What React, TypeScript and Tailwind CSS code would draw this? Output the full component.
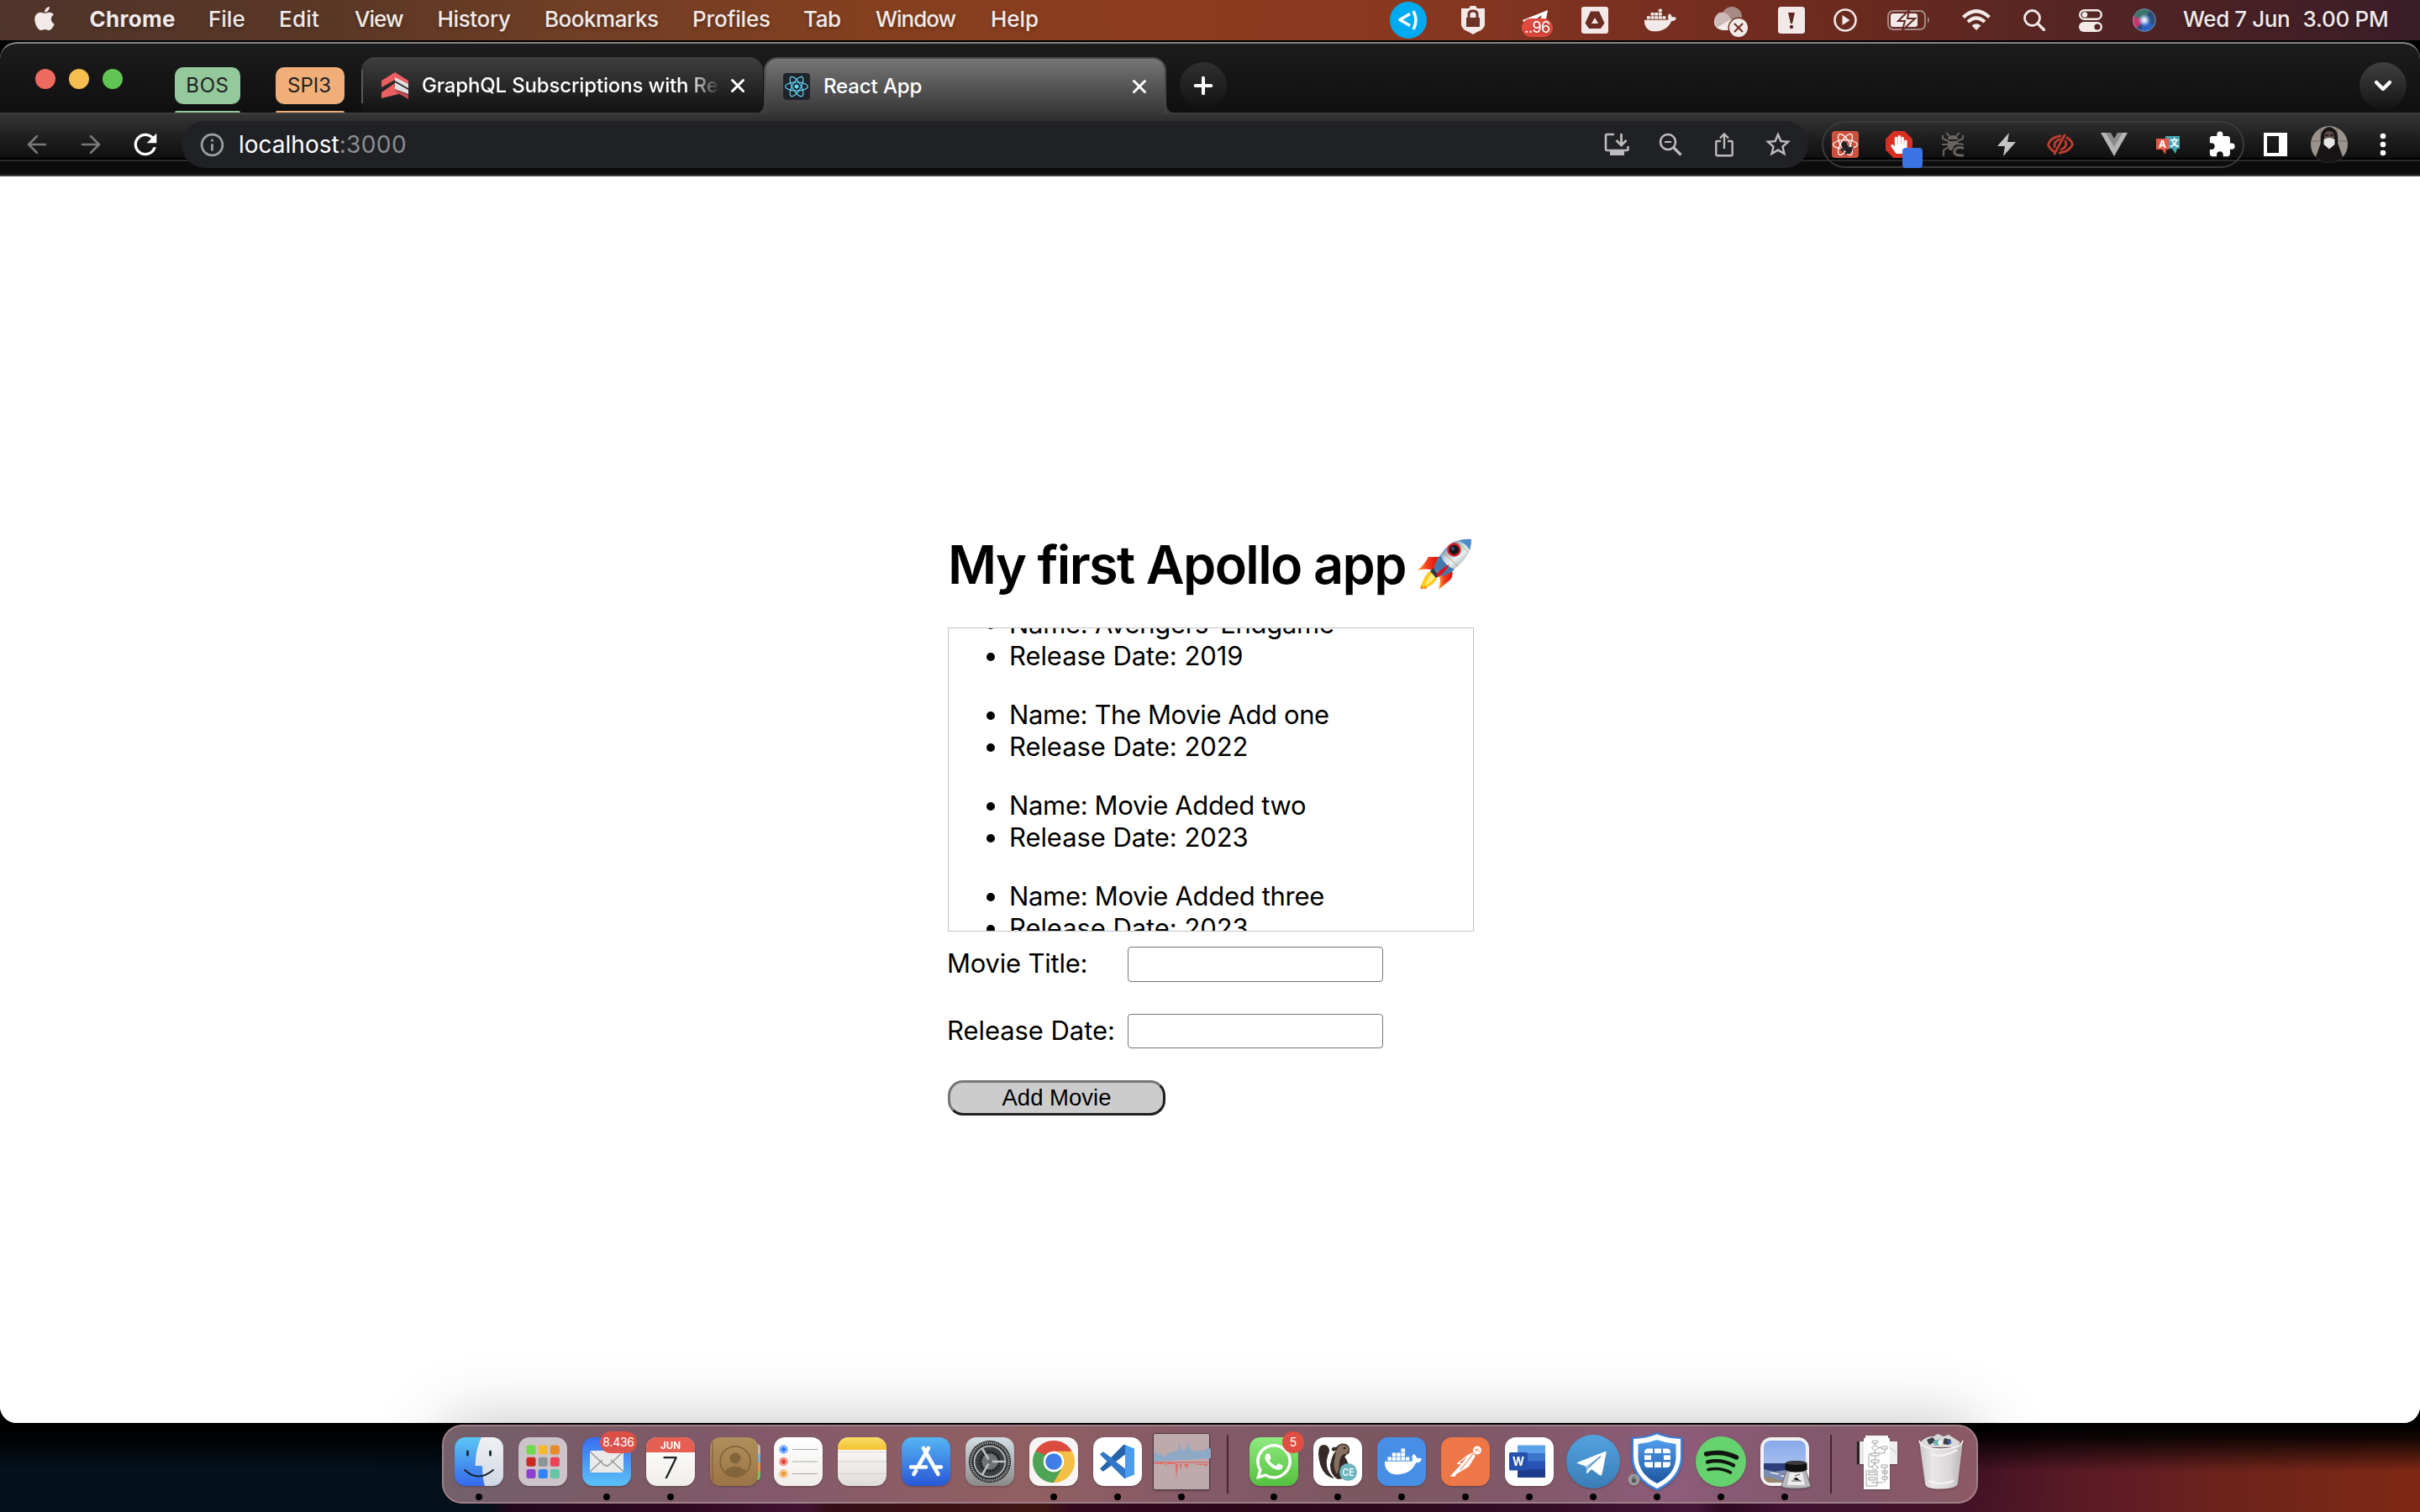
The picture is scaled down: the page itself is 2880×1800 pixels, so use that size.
import React from "react";
import { ArrowLeft, ArrowRight, ChevronDown, Plus, X } from "lucide-react";
import { FaApple, FaDocker, FaHandPaper, FaReact, FaWhatsapp } from "react-icons/fa";
import { MdExtension, MdInfoOutline, MdRefresh, MdStarBorder } from "react-icons/md";

const menus = [
  { label: "Chrome", cls: "w-[141.5px] font-bold tracking-[0.29px]" },
  { label: "File", cls: "w-[84px]" },
  { label: "Edit", cls: "w-[90px] tracking-[0.23px]" },
  { label: "View", cls: "w-[98.5px] tracking-[-0.94px]" },
  { label: "History", cls: "w-[127.5px] tracking-[-0.36px]" },
  { label: "Bookmarks", cls: "w-[176px] tracking-[-0.48px]" },
  { label: "Profiles", cls: "w-[132px] tracking-[-0.18px]" },
  { label: "Tab", cls: "w-[86px] tracking-[-0.42px]" },
  { label: "Window", cls: "w-[137px] tracking-[-1.02px]" },
  { label: "Help", cls: "tracking-[-0.06px]" },
];

function MenuBar() {
  return (
    <header className="flex h-12 shrink-0 items-center bg-[linear-gradient(90deg,#4f342a_0%,#5b3826_14%,#713e26_24%,#84401f_36%,#8e3b1f_48%,#8a391f_57%,#7a3021_67%,#67291f_78%,#522424_87%,#3a1d28_100%)] text-[26px] font-medium text-[#f1eae8] [text-shadow:0_2px_4px_rgba(0,0,0,0.3)]">
      <div className="flex w-[1654px] shrink-0 items-center pl-[37px]">
        <FaApple className="-mt-1 mr-[37.5px] size-8 shrink-0" />
        <nav className="flex pb-[3px]">
          {menus.map((m) => (
            <span key={m.label} className={`shrink-0 whitespace-nowrap ${m.cls}`}>
              {m.label}
            </span>
          ))}
        </nav>
      </div>
      <svg className="size-11 shrink-0" viewBox="0 0 44 44">
        <circle cx="22" cy="22" r="22" fill="#00aaf0" />
        <path d="M24 14.500 L12 21.500 L24 28.500" fill="none" stroke="#fff" strokeWidth="3.500" strokeLinejoin="round" />
        <path d="M28 11 Q34 22 28 33" fill="none" stroke="#fff" strokeWidth="3.500" />
      </svg>
      <svg className="ml-[41px] h-[34px] w-7 shrink-0" viewBox="0 0 28 34">
        <path d="M0 3h9l2-3h6l2 3h9v20q-1 5-9 8l-5 3-5-3q-8-3-9-8z" fill="#f1eae8" />
        <path d="M6 14h16v11H6z" fill="#6e3325" />
        <path d="M9 15V10q0-4 5-4t5 4v5" fill="none" stroke="#6e3325" strokeWidth="3" />
      </svg>
      <div className="relative ml-11 h-8 w-[37px] shrink-0">
        <svg className="absolute left-0 top-1 h-4 w-8" viewBox="0 0 32 16">
          <path d="M1 12 L31 0 L28 16 H20 L24 6 L12 14 L2 14z" fill="#fff" />
        </svg>
        <span className="absolute left-0 top-[14px] flex h-[22px] w-[37px] items-center justify-center rounded-full bg-[#e04b3f] text-[18px] leading-none font-normal tracking-[-0.5px] text-white">..96</span>
      </div>
      <svg className="ml-[34px] size-8 shrink-0" viewBox="0 0 32 32">
        <rect width="32" height="32" rx="3" fill="#f1eae8" />
        <path d="M11 5.500h10l6.500 14-4.500 6.500H9l-4.500-6.500z" fill="#6b2c22" />
        <path d="M16 13l4 7h-8z" fill="#f1eae8" />
      </svg>
      <FaDocker className="ml-[43px] h-[42px] w-[38px] shrink-0" />
      <svg className="ml-[45px] mt-1 h-9 w-10 shrink-0" viewBox="0 0 40 36">
        <circle cx="21" cy="12" r="12" fill="#a98a86" />
        <path d="M8 7Q0 10 0 18t10 10h12V16Z" fill="#f1eae8" />
        <path d="M6 7Q16 5 20 15L3 25Q-2 12 6 7Z" fill="#cdbab7" />
        <circle cx="29" cy="25" r="12.500" fill="#6f2d22" />
        <circle cx="29" cy="25" r="11" fill="#f1eae8" />
        <path d="M24 20l10 10M34 20L24 30" stroke="#6f2d22" strokeWidth="2" />
      </svg>
      <svg className="ml-9 size-8 shrink-0" viewBox="0 0 32 32">
        <rect width="32" height="32" rx="3.500" fill="#f1eae8" />
        <path d="M12 7h8l-3 13h-2z" fill="#5f2720" />
        <circle cx="16" cy="24" r="2.200" fill="#5f2720" />
      </svg>
      <svg className="ml-[34px] size-7 shrink-0" viewBox="0 0 28 28">
        <circle cx="14" cy="14" r="12.500" fill="none" stroke="#f1eae8" strokeWidth="2.600" />
        <path d="M10.500 8v12l9-6z" fill="#f1eae8" />
      </svg>
      <svg className="ml-9 h-6 w-[52px] shrink-0" viewBox="0 0 52 24">
        <rect x="1" y="1" width="44" height="22" rx="6" fill="none" stroke="#a58985" strokeWidth="2" />
        <path d="M48 8q4 4 0 8z" fill="#a58985" />
        <rect x="4" y="4" width="32" height="16" rx="3" fill="#f1eae8" />
        <path d="M26 0L13 13h8l-3 11L33 10h-9z" fill="#f1eae8" stroke="#63281f" strokeWidth="2" />
      </svg>
      <svg className="ml-[37px] h-[26px] w-[34px] shrink-0" viewBox="0 0 34 26">
        <path d="M1.500 9.500Q17 -5 32.500 9.500M7 15Q17 6 27 15" fill="none" stroke="#f1eae8" strokeWidth="4.200" />
        <path d="M11.500 19.500Q17 15 22.500 19.500L17 25z" fill="#f1eae8" />
      </svg>
      <svg className="ml-[39px] size-[26px] shrink-0" viewBox="0 0 26 26">
        <circle cx="10.500" cy="10.500" r="9" fill="none" stroke="#f1eae8" strokeWidth="2.800" />
        <path d="M17 17l7.500 7.500" stroke="#f1eae8" strokeWidth="3.400" strokeLinecap="round" />
      </svg>
      <svg className="ml-10 h-[27px] w-7 shrink-0" viewBox="0 0 28 27">
        <rect x="1.200" y="1.200" width="25.600" height="10.600" rx="5.300" fill="none" stroke="#f1eae8" strokeWidth="2.400" />
        <circle cx="7" cy="6.500" r="3.200" fill="#f1eae8" />
        <rect y="15" width="28" height="12" rx="6" fill="#f1eae8" />
        <circle cx="22" cy="21" r="3.600" fill="#512423" />
      </svg>
      <svg className="ml-9 size-7 shrink-0" viewBox="0 0 28 28">
        <defs>
          <radialGradient id="siriGlow" cx="0.5" cy="0.5" r="0.5">
            <stop offset="0" stopColor="#fff" />
            <stop offset="0.4" stopColor="#cfe3ff" stopOpacity="0.8" />
            <stop offset="1" stopColor="#7aa0ff" stopOpacity="0" />
          </radialGradient>
        </defs>
        <circle cx="14" cy="14" r="14" fill="#2c4f7c" />
        <path d="M1 11A14 14 0 0 1 20 2L14 14z" fill="#3c7468" />
        <path d="M1 9a14 14 0 0 0 3 15L14 14z" fill="#c2376d" />
        <path d="M10 26a14 14 0 0 0 16-6L14 14z" fill="#2b62c4" />
        <circle cx="14" cy="14" r="8" fill="url(#siriGlow)" />
        <circle cx="14" cy="14" r="13.300" fill="none" stroke="#9aa3ad" strokeOpacity="0.7" />
      </svg>
      <div className="ml-8 flex pb-[3px] whitespace-nowrap">
        <span className="w-[142.5px] tracking-[-0.43px]">Wed 7 Jun</span>
        <span className="tracking-[-0.27px]">3.00 PM</span>
      </div>
    </header>
  );
}

function TabStrip() {
  return (
    <div className="relative flex h-[84px] shrink-0 items-start bg-[linear-gradient(180deg,#1c1c1c,#0f0f0f)] text-2xl font-medium text-white">
      <div className="absolute bottom-0 left-0 h-0.5 w-full bg-[#3d3d3d]" />
      <div className="flex w-[208px] gap-4 pl-[42px] pt-[30px]">
        <span className="size-6 rounded-full bg-[#ec6a5e]" />
        <span className="size-6 rounded-full bg-[#f5bf4f]" />
        <span className="size-6 rounded-full bg-[#61c554]" />
      </div>
      <div className="relative flex h-[82px] w-[120px] flex-col justify-between pt-7 font-normal text-[#202124]">
        <span className="flex h-11 w-[78px] items-center justify-center rounded-[10px] bg-[#94c99b] tracking-[0.6px]">BOS</span>
        <span className="h-0.5 w-[78px] rounded-t bg-[#94c99b]" />
      </div>
      <div className="relative flex h-[82px] w-[102px] flex-col justify-between pt-7 font-normal text-[#202124]">
        <span className="flex h-11 w-[82px] items-center justify-center rounded-[10px] bg-[#f0ae79] pr-0.5">SPI3</span>
        <span className="h-0.5 w-[82px] rounded-t bg-[#f0ae79]" />
      </div>
      <div className="relative mt-4 flex h-[66px] w-[478px] items-center rounded-t-[16px] rounded-br-[12px] bg-[linear-gradient(180deg,#3f3f3f,#111111)] pl-6 pr-[17px] pt-px">
        <span className="absolute left-0 top-[15px] h-10 w-0.5 bg-[#5a5a5a]" />
        <svg className="size-8 shrink-0" viewBox="0 0 32 32">
          <path d="M0 10L16 0l16 10v9L16 9 0 18z" fill="#ec5f60" />
          <path d="M16 4l16 9v6L16 10z" fill="#e4dfe0" />
          <path d="M0 31v-7l16-11 4 3v10z" fill="#ec5f60" />
          <path d="M16 12l16 9v5L16 20z" fill="#e4dfe0" />
          <path d="M16 20l16 7v5l-16-9z" fill="#c74a4e" />
          <path d="M16 3l16 8v3L16 6z" fill="#ec5f60" />
        </svg>
        <span className="ml-4 w-[352px] overflow-hidden whitespace-nowrap tracking-[-0.16px] [mask-image:linear-gradient(90deg,#000_90%,transparent_101%)]">
          GraphQL Subscriptions with Re
        </span>
        <X className="ml-[11px] size-[26px] shrink-0" strokeWidth={2.8} />
      </div>
      <div className="relative ml-px mt-4 flex h-[68px] w-[479px] items-center rounded-t-[16px] border-x-2 border-t-2 border-[#484848] bg-[linear-gradient(180deg,#757575,#363636)] pl-[21px] pr-[17px]">
        <svg className="absolute -left-[15px] bottom-0 size-3.5" viewBox="0 0 14 14">
          <path d="M0 13Q13 13 13 0H14V14H0z" fill="#3a3a3a" />
        </svg>
        <svg className="absolute -right-[15px] bottom-0 size-3.5" viewBox="0 0 14 14">
          <path d="M14 13Q1 13 1 0H0V14H14z" fill="#3a3a3a" />
        </svg>
        <span className="flex size-8 items-center justify-center rounded bg-[#20232a]">
          <FaReact className="size-7 text-[#61dafb]" />
        </span>
        <span className="ml-4 flex-1 tracking-[-0.12px]">React App</span>
        <X className="size-[26px]" strokeWidth={2.8} />
      </div>
      <div className="ml-4 mt-[22px] flex size-14 items-center justify-center rounded-full bg-[linear-gradient(180deg,#303030,#111111)]">
        <Plus className="size-8" strokeWidth={3} />
      </div>
      <div className="ml-auto mr-4 mt-[22px] flex size-14 items-center justify-center rounded-full bg-[linear-gradient(180deg,#404040,#141414)]">
        <ChevronDown className="size-8" strokeWidth={3.2} />
      </div>
    </div>
  );
}

function Extensions() {
  return (
    <div className="ml-4 flex h-14 w-[503px] shrink-0 items-center gap-8 rounded-full border-2 border-[#3a3a3a] pl-2.5">
      <span className="relative flex size-8 shrink-0 items-center justify-center rounded-sm bg-[#cb5240]">
        <FaReact className="size-[30px] text-white" />
        <svg className="absolute left-2.5 top-3 size-4" viewBox="0 0 16 16">
          <path d="M7 5l6 6-3 3-6-6zM3 6l9 8M6 15l9-8M4 12l-3-3" stroke="#222" strokeWidth="2.500" fill="#222" />
          <circle cx="5" cy="4" r="3.500" fill="#222" />
        </svg>
      </span>
      <span className="relative flex size-8 shrink-0 items-center justify-center">
        <svg className="absolute inset-0" viewBox="0 0 32 32">
          <path d="M9.500 0h13L32 9.500v13L22.500 32h-13L0 22.500v-13z" fill="#d92f22" />
        </svg>
        <FaHandPaper className="relative size-[22px] text-white" />
        <span className="absolute left-5 top-5 size-6 rounded bg-[#3a74e3]" />
      </span>
      <svg className="size-8 shrink-0" viewBox="0 0 32 32">
        <g fill="none" stroke="#6a6460" strokeWidth="2">
          <path d="M8 2l4 4M24 2l-4 4M4 5v4l7 3M28 5v4l-7 3M3 16h8M21 15l8 1M5 30v-7l6-4" />
        </g>
        <path d="M10 10q0-5 6-5t6 5z" fill="#6a6460" />
        <path d="M10 12h12v4l-4 1-3 6-3 0-2-4z" fill="#6a6460" />
        <path d="M29 20.500q-9-3-11 3t11 5.500" fill="none" stroke="#6a6460" strokeWidth="3" />
      </svg>
      <svg className="size-8 shrink-0" viewBox="0 0 32 32">
        <path d="M19 2L5 18h9l-2 12 15-17h-10z" fill="#c4c4c4" />
      </svg>
      <svg className="size-8 shrink-0" viewBox="0 0 32 32">
        <g fill="none" stroke="#bd3f30" strokeWidth="2.800" strokeLinecap="round">
          <path d="M16 6Q5 7 1.500 16 3 21 8 24" />
          <path d="M24 8q5 3 6.500 8Q26 25 15 26" />
          <path d="M21 5L9 27M15 10q-7 2-6 9M22 12q3 7-5 10" />
        </g>
      </svg>
      <svg className="size-8 shrink-0" viewBox="0 0 32 32">
        <path d="M0 2h10l6 10 6-10h10L16 30z" fill="#b5b5b5" />
        <path d="M6 2h6l4 7 4-7h6L16 19z" fill="#8a8a8a" />
      </svg>
      <svg className="size-8 shrink-0" viewBox="0 0 32 32">
        <path d="M13 6h17v15h-3l-2 6-4-6h-8z" fill="#48a5b5" />
        <path d="M2 9h15v13h-3l-1 6-4-6H2z" fill="#e65a45" />
        <text x="9.500" y="20" fontSize="12" fontWeight="700" textAnchor="middle" fill="#fff">A</text>
        <text x="23.500" y="17.500" fontSize="11" fontWeight="700" textAnchor="middle" fill="#fff" className="font-['Noto_Sans_CJK_SC',sans-serif]">文</text>
      </svg>
      <MdExtension className="size-[34px] -mx-px shrink-0 text-white" />
    </div>
  );
}

function Toolbar() {
  return (
    <div className="flex h-[74px] shrink-0 items-center bg-[linear-gradient(180deg,#353535_0px,#1d1d1d_30px,#0f0f0f_52px,#000_52px,#000_54px,#2a2a2a_54px,#2a2a2a_56px,#0c0c0c_56px,#0c0c0c_72px,#3d3d3d_72px)] pb-0.5 pl-7">
      <div className="flex w-[188px] shrink-0 gap-[30px]">
        <ArrowLeft className="-ml-px mr-px size-[34px] text-[#7a7a7a]" strokeWidth={1.9} />
        <ArrowRight className="-ml-px mr-px size-[34px] text-[#7a7a7a]" strokeWidth={1.9} />
        <MdRefresh className="-ml-[3px] size-[40px] -my-[3px] text-white" />
      </div>
      <div className="flex h-14 w-[1936px] shrink-0 items-center rounded-full bg-[#202124] pl-5 pr-5 text-[28px] text-[#bcbcbc]">
        <MdInfoOutline className="size-[33px] text-[#9aa0a6]" />
        <span className="ml-[15px] text-white">localhost</span>
        <span className="flex-1 tracking-[0.4px] text-[#8b8c8e]">:3000</span>
        <div className="flex items-center gap-8">
          <svg className="size-8" viewBox="0 0 32 32">
            <path d="M13 4H4.500Q3 4 3 5.500V21.500Q3 23 4.500 23H28Q29.500 23 29.500 21.500V18" fill="none" stroke="currentColor" strokeWidth="2.600" />
            <path d="M21.500 3v12M15.500 11l6 6 6-6" fill="none" stroke="currentColor" strokeWidth="2.800" />
            <path d="M8 24h17v5H8z" fill="currentColor" />
          </svg>
          <svg className="size-8" viewBox="0 0 32 32">
            <circle cx="13" cy="13" r="9" fill="none" stroke="currentColor" strokeWidth="2.600" />
            <path d="M9 13h8" stroke="currentColor" strokeWidth="2" />
            <path d="M19.500 19.500l9 9" stroke="currentColor" strokeWidth="3.200" />
          </svg>
          <svg className="size-8" viewBox="0 0 32 32">
            <path d="M12 12H7.500Q6.300 12 6.300 13.200V28Q6.300 29.200 7.500 29.200H24.500Q25.700 29.200 25.700 28V13.200Q25.700 12 24.500 12H20" fill="none" stroke="currentColor" strokeWidth="2.400" />
            <path d="M16 21V4M11 8.500l5-5 5 5" fill="none" stroke="currentColor" strokeWidth="2.400" />
          </svg>
          <MdStarBorder className="-mx-0.5 size-[36px]" />
        </div>
      </div>
      <Extensions />
      <svg className="ml-[23px] size-7 shrink-0" viewBox="0 0 28 28">
        <path fillRule="evenodd" d="M0 0h28v28H0zM4 4v20h14V4z" fill="#fff" />
      </svg>
      <svg className="ml-7 size-11 shrink-0 rounded-full" viewBox="0 0 44 44">
        <rect width="44" height="44" fill="#9c948c" />
        <path d="M12 0v44M31 0v44M0 18h44" stroke="#7f776f" strokeWidth="1.500" />
        <path d="M22 1Q10 3 12 20L7 34 3 44h38l-4-10-5-14Q34 3 22 1z" fill="#171415" />
        <path d="M16 12q0-6 6-6t6 6v8H16z" fill="#5c4c46" />
        <path d="M17 11h4M23 11h4" stroke="#171415" strokeWidth="1.500" />
        <path d="M15.500 16q6.500-4 13 0v6l-6.500 5.500-6.500-5.500z" fill="#e6e4e4" />
      </svg>
      <svg className="ml-[38px] h-7 w-2 shrink-0" viewBox="0 0 8 28">
        <circle cx="4" cy="4" r="3.300" fill="#fff" />
        <circle cx="4" cy="14" r="3.300" fill="#fff" />
        <circle cx="4" cy="24" r="3.300" fill="#fff" />
      </svg>
    </div>
  );
}

function Rocket() {
  return (
    <svg className="h-[61px] w-[65px] shrink-0" viewBox="0 0 65 61">
      <defs>
        <linearGradient id="hull" x1="0.2" y1="0.2" x2="0.8" y2="0.9">
          <stop offset="0" stopColor="#4f7fb0" />
          <stop offset="0.35" stopColor="#c9d8e4" />
          <stop offset="0.55" stopColor="#e8eef2" />
          <stop offset="1" stopColor="#7e8a92" />
        </linearGradient>
        <linearGradient id="fin" x1="0" y1="0" x2="1" y2="0">
          <stop offset="0" stopColor="#ffb02e" />
          <stop offset="0.4" stopColor="#f5401d" />
          <stop offset="1" stopColor="#d8080f" />
        </linearGradient>
      </defs>
      <path d="M27 22L13 22Q9 30 0 38Q10 35 20 38z" fill="url(#fin)" />
      <path d="M41 37Q43 46 38 50L25 61Q28 50 26 45z" fill="url(#fin)" />
      <path d="M17 37Q8 42 3 60Q20 58 24 45z" fill="#ffc91f" />
      <path d="M18 41Q12 46 9 56Q17 52 21 46z" fill="#fff07a" />
      <path d="M3 60l2-5 2 4 3-3 1 4z" fill="#f58a1d" />
      <path d="M19 35l7 9-4 3-7-8z" fill="#2f3a46" />
      <path d="M64 1Q44-1 32 13 21 26 20 36l8 9Q42 40 53 28 66 14 64 1z" fill="url(#hull)" />
      <path d="M64 1Q56 0 49 3q9 3 13 11 2-6 2-13z" fill="#4f8ac9" />
      <path d="M27 20q-6 8-7 16l8 9q9-2 16-8Q33 33 27 20z" fill="#4479ae" />
      <path d="M30 16l18 17M47 4l14 13" stroke="#c9a24a" strokeWidth="1" />
      <path d="M22 43Q32 33 38 31Q33 40 25 46z" fill="#e0121a" />
      <circle cx="43.500" cy="13.500" r="7" fill="#14161a" stroke="#cf1f2a" strokeWidth="2.600" />
      <circle cx="42" cy="12" r="2.200" fill="#3b4d68" />
    </svg>
  );
}

const movies = [
  { name: "Avengers-Endgame", year: "2019", cls: "tracking-[-0.29px]" },
  { name: "The Movie Add one", year: "2022", cls: "tracking-[-0.38px]" },
  { name: "Movie Added two", year: "2023", cls: "tracking-[-0.34px]" },
  { name: "Movie Added three", year: "2023", cls: "tracking-[-0.32px]" },
];

function Item({ children, cls = "" }: { children: React.ReactNode; cls?: string }) {
  return (
    <li className="flex h-[38px] items-center gap-[17px] whitespace-nowrap">
      <span className="mt-0.5 size-2.5 shrink-0 rounded-full bg-black" />
      <span className={cls}>{children}</span>
    </li>
  );
}

function Page() {
  return (
    <main className="flex flex-1 flex-col items-center bg-white pl-0.5 pt-[424px] text-[31px] leading-[38px] text-black">
      <div className="flex w-[626px] flex-col">
        <h1 className="flex h-[76px] items-start whitespace-nowrap text-[63px] font-semibold leading-[76px]">
          <span className="w-[559px] tracking-[-1.65px]">My first Apollo app</span>
          <span className="pt-[7px]">
            <Rocket />
          </span>
        </h1>
        <div className="mt-[37px] h-[362px] overflow-hidden border border-[#c4c4c4]">
          <div className="-mt-6 flex flex-col gap-8 pl-[45px]">
            {movies.map((m) => (
              <ul key={m.name}>
                <Item cls={m.cls}>Name: {m.name}</Item>
                <Item cls="tracking-[-0.07px]">Release Date: {m.year}</Item>
              </ul>
            ))}
          </div>
        </div>
        <form className="mt-[18px] flex flex-col items-start gap-[38px]">
          <label className="flex h-[42px] items-center">
            <span className="-ml-px w-[215px] pb-0.5 tracking-[-0.22px]">Movie Title:</span>
            <input className="h-[42px] w-[304px] rounded-[4px] border border-[#767676] bg-white" />
          </label>
          <label className="flex h-[41px] items-center">
            <span className="-ml-px w-[215px] pb-0.5 tracking-[-0.06px]">Release Date:</span>
            <input className="h-[41px] w-[304px] rounded-[4px] border border-[#767676] bg-white" />
          </label>
          <button
            type="button"
            className="flex h-[42px] w-[259px] items-center justify-center rounded-[18px] border-[3px] border-b-[#1e1e1e] border-l-[#767676] border-r-[#1e1e1e] border-t-[#767676] bg-[#cccccc] font-['Liberation_Sans',sans-serif] text-[27.5px] leading-none"
          >
            Add Movie
          </button>
        </form>
      </div>
    </main>
  );
}

function App58({ children, dot = false, badge }: { children: React.ReactNode; dot?: boolean; badge?: React.ReactNode }) {
  return (
    <div className="relative flex w-19 shrink-0 flex-col items-center pt-[13px]">
      <svg className="size-[58px] overflow-visible drop-shadow-[0_1px_1px_rgba(0,0,0,0.25)]" viewBox="0 0 58 58">
        {children}
      </svg>
      {dot && <span className="mt-[9px] size-2 rounded-full bg-black" />}
      {badge}
    </div>
  );
}

function Divider() {
  return (
    <div className="flex w-[34px] shrink-0 justify-center pt-2.5">
      <span className="h-[70px] w-0.5 bg-[#4c2331]" />
    </div>
  );
}

const launchpad = ["#6fdb4c", "#f3b92f", "#e68a2b", "#c92a1e", "#8d9498", "#ec4256", "#8c3fd0", "#2f86f3", "#63c6a4"];
const gearAngles = [90, 210, 330];

function Dock() {
  return (
    <div className="relative flex h-[94px] w-[1828px] shrink-0 self-center rounded-[24px] border-2 border-[#9f7f89] bg-[linear-gradient(90deg,#74606a_0%,#7b5a66_12%,#84596a_22%,#8b5d66_30%,#905f62_38%,#845a68_50%,#7b5761_60%,#83596b_72%,#8d5c79_80%,#82586c_90%,#8c5a66_100%)] pl-1 shadow-[0_0_80px_rgba(0,0,0,0.26)]">
      <svg className="absolute size-0">
        <defs>
          <linearGradient id="finderBlue" x1="0" y1="0" x2="0" y2="1"><stop offset="0" stopColor="#5cc6f5" /><stop offset="1" stopColor="#3568ec" /></linearGradient>
          <linearGradient id="finderWhite" x1="0" y1="0" x2="0" y2="1"><stop offset="0" stopColor="#f1f1f4" /><stop offset="1" stopColor="#cfd8e4" /></linearGradient>
          <linearGradient id="mailBlue" x1="0" y1="0" x2="0" y2="1"><stop offset="0" stopColor="#3a6df0" /><stop offset="1" stopColor="#5ac1f8" /></linearGradient>
          <linearGradient id="paper" x1="0" y1="0" x2="0" y2="1"><stop offset="0" stopColor="#fff" /><stop offset="1" stopColor="#f0eeea" /></linearGradient>
          <linearGradient id="notes" x1="0" y1="0" x2="0" y2="1"><stop offset="0.2" stopColor="#fbfaf8" /><stop offset="1" stopColor="#dfddd8" /></linearGradient>
          <linearGradient id="yellow" x1="0" y1="0" x2="0" y2="1"><stop offset="0" stopColor="#f8dd66" /><stop offset="1" stopColor="#f4c233" /></linearGradient>
          <linearGradient id="brown" x1="0" y1="0" x2="0" y2="1"><stop offset="0" stopColor="#b08f5c" /><stop offset="1" stopColor="#9b7445" /></linearGradient>
          <linearGradient id="store" x1="0" y1="0" x2="0" y2="1"><stop offset="0" stopColor="#55b5f3" /><stop offset="1" stopColor="#2a57d6" /></linearGradient>
          <linearGradient id="prefs" x1="0" y1="0" x2="0" y2="1"><stop offset="0" stopColor="#d3dee5" /><stop offset="1" stopColor="#8b8a88" /></linearGradient>
          <linearGradient id="wa" x1="0" y1="0" x2="0" y2="1"><stop offset="0" stopColor="#8deb7e" /><stop offset="1" stopColor="#55c03f" /></linearGradient>
          <linearGradient id="tg" x1="0" y1="0" x2="0" y2="1"><stop offset="0" stopColor="#52a3df" /><stop offset="1" stopColor="#3a7db8" /></linearGradient>
          <linearGradient id="forti" x1="0" y1="0" x2="0" y2="1"><stop offset="0" stopColor="#4f9cec" /><stop offset="1" stopColor="#1f559f" /></linearGradient>
          <linearGradient id="sky" x1="0" y1="0" x2="0" y2="1"><stop offset="0" stopColor="#88a9e8" /><stop offset="1" stopColor="#b9cdf2" /></linearGradient>
          <linearGradient id="bin" x1="0" y1="0" x2="1" y2="0"><stop offset="0" stopColor="#c9c6c8" /><stop offset="0.3" stopColor="#e9e7e8" /><stop offset="0.7" stopColor="#dad7d8" /><stop offset="1" stopColor="#b9b5b8" /></linearGradient>
          <clipPath id="tile"><rect width="58" height="58" rx="13" /></clipPath>
          <clipPath id="photo"><rect x="4" y="4" width="50" height="50" rx="8" /></clipPath>
        </defs>
      </svg>

      <App58 dot>
        <g clipPath="url(#tile)">
          <rect width="58" height="58" fill="url(#finderBlue)" />
          <path d="M32 0Q25 14 24.500 34h8.500q0 14 3 24H58V0z" fill="url(#finderWhite)" />
        </g>
        <path d="M15.500 17v4M42.500 17v4" stroke="#1d2b3a" strokeWidth="3" strokeLinecap="round" />
        <path d="M12 39q16 15 34 0" fill="none" stroke="#17222e" strokeWidth="2" strokeLinecap="round" />
      </App58>
      <App58>
        <rect width="58" height="58" rx="13" fill="#cdc4ca" />
        {launchpad.map((c, i) => (
          <rect key={c} x={9.5 + (i % 3) * 14.2} y={9.5 + Math.floor(i / 3) * 14.2} width="11" height="11" rx="2.500" fill={c} />
        ))}
      </App58>
      <App58
        dot
        badge={<span className="absolute left-[30px] top-1.5 flex h-[26px] w-11 items-center justify-center rounded-full bg-[#e14f42]/95 text-sm leading-none tracking-[-0.3px] text-white">8.436</span>}
      >
        <rect width="58" height="58" rx="13" fill="url(#mailBlue)" />
        <rect x="9" y="16" width="40" height="26" rx="2" fill="#eaeaea" />
        <path d="M9 41l15-14M49 41L34 27M9 17l16 15q4 4 8 0l16-15" fill="none" stroke="#8f9193" strokeWidth="1.200" />
      </App58>
      <App58 dot>
        <g clipPath="url(#tile)">
          <rect width="58" height="58" fill="url(#paper)" />
          <rect width="58" height="18" fill="#e55f52" />
        </g>
        <text x="29" y="13.500" fontSize="11.500" fontWeight="700" textAnchor="middle" fill="#fff">JUN</text>
        <text x="28.500" y="48.500" fontSize="35" fontWeight="300" textAnchor="middle" fill="#222">7</text>
      </App58>
      <App58>
        <path d="M50 8h6q4 0 4 5v7H50z" fill="#bdb8b0" />
        <path d="M50 20h10v10H50z" fill="#62b7ee" />
        <path d="M50 30h10v11H50z" fill="#ee9036" />
        <path d="M50 41h10v5q0 5-4 5h-6z" fill="#62d061" />
        <rect width="57" height="58" rx="12" fill="url(#brown)" />
        <path d="M3 5v48" stroke="#7c5c35" strokeWidth="1" />
        <circle cx="30" cy="29" r="18" fill="none" stroke="#7f6138" strokeWidth="1.600" />
        <circle cx="30" cy="25" r="6.500" fill="#83653b" />
        <path d="M17 41q13-13 26 0-13 11-26 0z" fill="#83653b" />
      </App58>
      <App58>
        <rect width="58" height="58" rx="13" fill="url(#paper)" />
        <path d="M22 14.500h30M22 29h30M22 43.500h30" stroke="#a8a8a8" strokeWidth="1" />
        <circle cx="11.500" cy="14.500" r="5" fill="#2f79f6" /><circle cx="11.500" cy="14.500" r="3.700" fill="none" stroke="#fff" strokeWidth="0.900" />
        <circle cx="11.500" cy="29" r="5" fill="#e5473a" /><circle cx="11.500" cy="29" r="3.700" fill="none" stroke="#fff" strokeWidth="0.900" />
        <circle cx="11.500" cy="43.500" r="5" fill="#ee9a34" /><circle cx="11.500" cy="43.500" r="3.700" fill="none" stroke="#fff" strokeWidth="0.900" />
      </App58>
      <App58>
        <g clipPath="url(#tile)">
          <rect width="58" height="58" fill="url(#notes)" />
          <rect width="58" height="15" fill="url(#yellow)" />
          <path d="M0 17.500h58" stroke="#b5b2ac" strokeWidth="1" strokeDasharray="1 1.500" />
          <path d="M0 29h58M0 43.500h58" stroke="#d2d0cb" strokeWidth="1" />
        </g>
      </App58>
      <App58>
        <rect width="58" height="58" rx="13" fill="url(#store)" />
        <g stroke="#fff" strokeWidth="4.600" strokeLinecap="round">
          <path d="M32 13L20 34M17 40l-2.500 4M26 13l17.500 31M11 35.500h18M39 35.500h8" />
        </g>
      </App58>
      <App58>
        <rect width="58" height="58" rx="13" fill="url(#prefs)" />
        <circle cx="29" cy="29" r="25" fill="#1f2022" />
        <circle cx="29" cy="29" r="22.500" fill="none" stroke="#9a9c9e" strokeWidth="3" strokeDasharray="1.600 1" />
        <circle cx="29" cy="29" r="18.500" fill="#3c3e40" stroke="#b0b2b4" strokeWidth="2" />
        <circle cx="29" cy="29" r="11" fill="#707274" stroke="#1f2022" strokeWidth="3" strokeDasharray="3 0.800" />
        {gearAngles.map((a) => (
          <path key={a} d="M29 29V10" stroke="#bfc1c3" strokeWidth="2.600" transform={`rotate(${a} 29 29)`} />
        ))}
        <circle cx="29" cy="29" r="3" fill="#6a6c6e" />
      </App58>
      <App58 dot>
        <rect width="58" height="58" rx="13" fill="#f7f5f4" />
        <path d="M29 29L7.350 16.500A25 25 0 0 1 50.650 16.500z" fill="#dc4b3e" />
        <path d="M29 29L50.650 16.500A25 25 0 0 1 29 54z" fill="#f3bf45" />
        <path d="M29 29L29 54A25 25 0 0 1 7.350 16.500z" fill="#4fa355" />
        <path d="M29 16.500H50.650L40 24z" fill="#f3bf45" />
        <path d="M7.350 16.500L18.500 35 22 22z" fill="#4fa355" />
        <path d="M29 16.500H51L29 14.500z" fill="#dc4b3e" />
        <path d="M39.500 35.500L29 54l-4-12z" fill="#4fa355" />
        <circle cx="29" cy="29" r="12.300" fill="#fff" />
        <circle cx="29" cy="29" r="9.800" fill="#3f7ee8" />
      </App58>
      <App58 dot>
        <rect width="58" height="58" rx="13" fill="#fff" />
        <path d="M8 37.500L36 9l3 0v11.500L13 40q-1.500 1-2.500 0z" fill="#2663a8" />
        <path d="M8 20.500L37 49h2V37.500L13 18q-1.500-1-2.500 0z" fill="#3277c6" />
        <path d="M38 9l11 4.500v31L38 49z" fill="#4a9cec" />
        <path d="M38 20.500L27 29l11 8.500z" fill="#fff" />
      </App58>
      <App58 dot>
        <rect x="-4.500" y="-4.500" width="67" height="67" rx="2" fill="#bea9ad" stroke="#4a3a40" />
        <path d="M-4 29V20l3-3 2 4 4-1 3 3 3-1 2-5 2 3 3-3 3 1 2-3 2 2 1-12 3 10 2 1 2-3 2 2 2-9 3 8 3 3 3-2 3 2 4-2 4 1 4-4 3 2v11z" fill="#8ea9c6" />
        <path d="M-4 30h66" stroke="#df6a63" strokeWidth="1.500" />
        <path d="M-4 31h12l2 3 2-3h8l2 1 1 18 2-18h2l1 7 2-7h2l3 5 3-5h8l2 1h8l2 2 2-2v-1z" fill="#df6a63" />
      </App58>

      <Divider />

      <App58
        dot
        badge={<span className="absolute left-[48px] top-1.5 flex size-[26px] items-center justify-center rounded-full bg-[#e14f42] text-sm leading-none text-white">5</span>}
      >
        <rect width="58" height="58" rx="13" fill="url(#wa)" />
        <svg x="5" y="5" width="48" height="48"><FaWhatsapp size={48} color="#fff" /></svg>
      </App58>
      <App58 dot>
        <rect width="58" height="58" rx="13" fill="#fff" />
        <path d="M12 9q7 0 7 8-4 9-3 17t9 15Q8 46 6 20 6 9 12 9z" fill="#352a27" />
        <path d="M20 33q0-10 5-16-4-1-3-4 2-2 5-1 5-6 11-4 6 2 5 9-1 5-6 6 5 6 5 14v6q0 6-13 7-9-5-9-17z" fill="#352a27" />
        <path d="M29 12q3-4 8-3 5 2 5 6-1 5-6 5-4 3-5 9 0 9-3 15-6-10-2-21 0-6 3-11z" fill="#877060" />
        <path d="M26 16q-5 6-6 15" fill="none" stroke="#fff" strokeWidth="1.400" />
        <circle cx="37" cy="13" r="1.200" fill="#1a1514" />
        <path d="M38 20.500q3 1 4-2l-1 6z" fill="#fff" />
        <circle cx="41.500" cy="41.500" r="10.500" fill="#6eb5bd" />
        <text x="41.500" y="46" fontSize="12" fontWeight="500" textAnchor="middle" fill="#fff" textLength="14" lengthAdjust="spacingAndGlyphs">CE</text>
      </App58>
      <App58 dot>
        <rect width="58" height="58" rx="13" fill="#478fe6" />
        <svg x="9" y="5" width="44" height="48"><FaDocker className="h-12 w-11" color="#fff" /></svg>
      </App58>
      <App58 dot>
        <rect width="58" height="58" rx="13" fill="#ee7748" />
        <circle cx="43" cy="15.500" r="5" fill="#fff" />
        <path d="M40 14l6 3M44 13l-3 4" stroke="#ee7748" strokeWidth="0.900" />
        <path d="M37 18l4 4-8 13-15 9-1.500 3-6-.5 2-2 12-13 6-8z" fill="#fff" />
        <path d="M38 20L23 39M35 19L20 31" stroke="#ee7748" strokeWidth="1.100" />
        <path d="M34 20L20 31l5 1" fill="none" stroke="#fff" strokeWidth="1.500" />
      </App58>
      <App58 dot>
        <rect width="58" height="58" rx="13" fill="#fff" />
        <rect x="15" y="9.500" width="33" height="10" fill="#5ba2ea" />
        <rect x="15" y="19" width="33" height="10" fill="#3d74cc" />
        <rect x="15" y="28.500" width="33" height="10" fill="#2852b5" />
        <rect x="15" y="38" width="33" height="10" fill="#1d3c8c" />
        <rect x="5" y="18" width="22" height="21.500" rx="1.500" fill="#2650ae" />
        <text x="16" y="34" fontSize="15" fontWeight="700" textAnchor="middle" fill="#fff" textLength="14" lengthAdjust="spacingAndGlyphs">W</text>
      </App58>
      <App58 dot>
        <circle cx="29" cy="29" r="32" fill="url(#tg)" />
        <path d="M9 30.500L43 17q2-.5 1.500 2L39.500 44q-.8 2.500-3 1L27 38l-5 5q-1 .5-1-1v-7z" fill="#fff" />
        <path d="M20 35l18-13-14 14.500-2 5z" fill="#9cc4e4" />
        <path d="M23.500 36L38 22.500" stroke="#4a92cc" strokeWidth="1.500" />
      </App58>
      <App58 dot>
        <path d="M-1.500 0Q15 0 29-6 43 0 59.500 0V24Q59 50 29 64-1 50-1.500 24z" fill="#3a7fd8" />
        <path d="M1 2Q16 1.500 29-3.500 42 1.500 57 2V24Q56 48 29 61 2 48 1 24z" fill="#fff" />
        <path d="M6.500 8Q18 7 29 3 40 7 51.500 8V24Q51 44 29 55 7 44 6.500 24z" fill="url(#forti)" />
        <path d="M18 13.500h6v5.500H14v-2q1-3.500 4-3.500zM26 13.500h8v5.500h-8zM36 13.500h5q3 0 4 3.500v2h-9zM14 21.500h8v5.500h-8zM37 21.500h8v5.500h-8zM14 29.500h10V36h-6q-3 0-4-3.500zM26 29.500h8V36h-8zM36 29.500h9v3q-1 3.500-4 3.500h-5z" fill="#fff" />
        <circle cx="1.500" cy="50.500" r="7" fill="#9a9a9c" />
        <path d="M-1 49.500h5v4.500h-5z" fill="#55565a" />
        <path d="M0 49.500v-1.500q1.500-2.500 3 0v1.500" fill="none" stroke="#55565a" />
      </App58>
      <App58 dot>
        <circle cx="29" cy="29" r="30" fill="#66d26f" />
        <g fill="none" stroke="#10160f" strokeLinecap="round">
          <path d="M11.500 20q19-4.500 36 4" strokeWidth="5.400" />
          <path d="M13 29.500q16-4 31 4" strokeWidth="4.400" />
          <path d="M14 38.500q14-3 26.500 3.500" strokeWidth="3.600" />
        </g>
      </App58>
      <App58 dot>
        <rect width="58" height="58" rx="13" fill="#f2f0f0" />
        <g clipPath="url(#photo)">
          <rect x="4" y="4" width="50" height="50" fill="url(#sky)" />
          <rect x="4" y="31" width="50" height="12" fill="#2d3e7c" />
          <path d="M4 38l12 3 14-2 24 3v12H4z" fill="#7b8db3" />
          <path d="M4 47l10 1 8 3 8 0 6 4H4z" fill="#97856f" />
          <path d="M12 42l10 2M24 46l8 1" stroke="#e8edf5" strokeWidth="1.500" />
        </g>
        <path d="M31 40h23l6 18q-3 3-18 3t-17-3z" fill="#b9babd" stroke="#6b6b6f" strokeWidth="1" />
        <path d="M35 42h15l3 15H32z" fill="#eceded" />
        <path d="M41 46l6-2M37 52h12M39 50l4-2 4 4" stroke="#555" strokeWidth="1" />
        <path d="M29.500 31q13-6 26 0v8q-13 5-26 0z" fill="#101011" />
        <ellipse cx="42.500" cy="30.500" rx="12.500" ry="2.600" fill="#3a3a3c" />
      </App58>

      <Divider />

      <App58>
        <path d="M5 5h12v27H5z" fill="#e7e7e7" /><path d="M5 5h3v27H5z" fill="#222" />
        <path d="M41 5h12v27H41z" fill="#efefef" /><path d="M44 12l8 7" stroke="#bbb" />
        <rect x="15" y="-2" width="27" height="10" fill="#f7f7f7" />
        <rect x="13" y="1" width="31" height="61" fill="#fdfdfd" />
        <g fill="none" stroke="#9b9b9b" strokeWidth="0.900">
          <rect x="23" y="4" width="7" height="3" rx="1" />
          <path d="M26.500 7v3M26.500 9l4 3.500-4 3.500-4-3.500zM30.500 12.500h3M26.500 16v3M22 19h9v3h-9zM26.500 22v5M22 27h9v3h-9zM26.500 30v3l4 3-4 3-4-3zM22 20H19v15h4M38 14v5H31M34 11h7v3h-7zM34 33h7v3h-7zM38 36v12M35 40h6v3h-6zM35 47h6v3h-6zM16 40h13v18H16zM19 42h8v3h-8zM19 48h8v3h-8zM22 54h14M38 50v4" />
        </g>
      </App58>
      <App58>
        <path d="M4 6q8-8 16-7l5-3 7 3 6-2 8 5 6 4-4 6H8z" fill="#d9d9da" />
        <path d="M12 3l7-3 4 5-8 4zM33 1l8 2-3 6-7-1z" fill="#3d3d45" />
        <path d="M19 5l9-3 2 6-8 2z" fill="#62b6ae" />
        <path d="M36 2l6 4-3 3z" fill="#3d62c4" />
        <path d="M27 2l5 5-4 3-3-3z" fill="#f1f1f1" />
        <path d="M3 4q5 10 26 10T55 4l-6 51q-1 6-20 6.500T10 55z" fill="url(#bin)" />
        <path d="M18 20q10 6 30-5M14 52q14 6 30 0" fill="none" stroke="#f7f6f6" strokeWidth="2" />
        <path d="M3 4q2 10 26 10T55 4" fill="none" stroke="#f5f5f5" strokeWidth="1.500" />
      </App58>
    </div>
  );
}

export default function App() {
  return (
    <div className="flex h-[1800px] w-[2880px] flex-col overflow-hidden bg-[linear-gradient(180deg,#000_0px,#000_1696px,rgba(0,0,0,0.85)_1712px,rgba(0,0,0,0)_1752px),linear-gradient(90deg,#05121d_0px,#05121d_580px,#2a0820_610px,#330a22_800px,#4a1638_960px,#3a0f1a_985px,#4a1a15_1240px,#3a0a22_1275px,#30081c_1500px,#3b0f2a_1840px,#4d1840_2020px,#330a24_2050px,#4a1538_2130px,#4a1528_2360px,#5f1c24_2520px,#6c231c_2640px,#802814_2880px)] font-['Inter',sans-serif]">
      <MenuBar />
      <div className="mt-0.5 flex h-[1644px] shrink-0 flex-col overflow-hidden rounded-[20px] border-t-2 border-[#858585] bg-white">
        <TabStrip />
        <Toolbar />
        <Page />
      </div>
      <div className="mt-0.5 flex shrink-0 justify-center">
        <Dock />
      </div>
    </div>
  );
}
